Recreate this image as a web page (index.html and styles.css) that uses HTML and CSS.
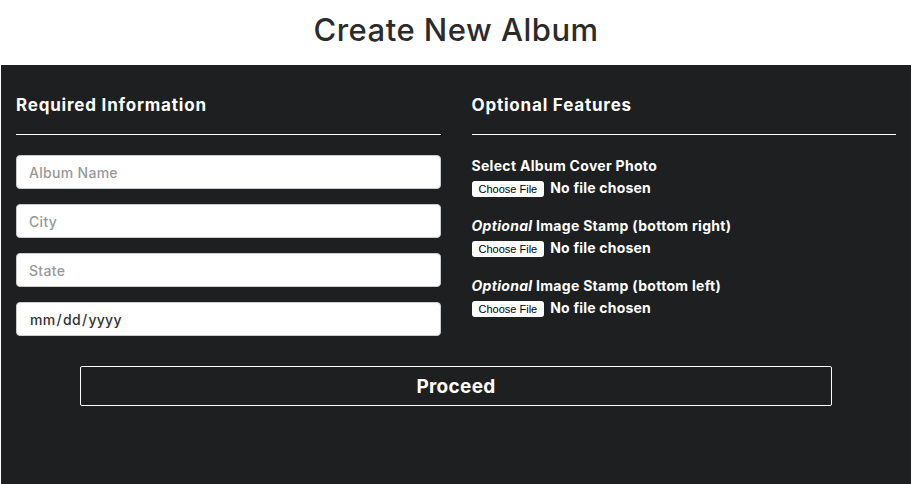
FILE: index.html
```html
<!DOCTYPE html>
<html lang="en">
<head>
  <meta charset="UTF-8">
  <title>Create New Album</title>
  <link rel="stylesheet" href="styles.css">
</head>
<body>
  <h1 class="page-title">Create New Album</h1>

  <div class="panel">
    <form class="album-form" onsubmit="return false">
      <div class="columns">
        <section class="col">
          <h2>Required Information</h2>
          <hr>
          <input type="text" class="field" placeholder="Album Name">
          <input type="text" class="field" placeholder="City">
          <input type="text" class="field" placeholder="State">
          <input type="date" class="field">
        </section>

        <section class="col">
          <h2>Optional Features</h2>
          <hr>
          <div class="file-group">
            <label>Select Album Cover Photo</label>
            <input type="file" class="file">
          </div>
          <div class="file-group">
            <label><em>Optional</em> Image Stamp (bottom right)</label>
            <input type="file" class="file">
          </div>
          <div class="file-group">
            <label><em>Optional</em> Image Stamp (bottom left)</label>
            <input type="file" class="file">
          </div>
        </section>
      </div>

      <button type="submit" class="proceed">Proceed</button>
    </form>
  </div>
</body>
</html>
```

FILE: styles.css
```css
body {
  margin: 0;
  padding: 0;
  font-family: Inter, 'Open Sans', sans-serif;
  background: #fff;
}

.page-title {
  box-sizing: border-box;
  height: 65px;
  margin: 0;
  padding-bottom: 6px;
  display: flex;
  align-items: center;
  justify-content: center;
  font-size: 31px;
  font-weight: 500;
  letter-spacing: 0.5px;
  color: #2b2b2b;
}

.panel {
  width: 880px;
  margin: 0 auto;
  padding: 28px 15px 80px;
  background: #1e1f21;
  color: #fff;
}

.columns {
  display: flex;
  gap: 31px;
}

.col {
  flex: 1;
}

.col h2 {
  margin: 0;
  font-size: 17px;
  line-height: 24px;
  font-weight: 700;
  letter-spacing: 0.8px;
}

.col hr {
  margin: 17px 0 20px;
  border: none;
  border-top: 1px solid #fff;
}

.field {
  display: block;
  box-sizing: border-box;
  width: 100%;
  height: 34px;
  margin: 0 0 15px;
  padding: 0 12px;
  font-family: inherit;
  font-size: 14px;
  font-weight: 500;
  letter-spacing: 0.3px;
  color: #333;
  background: #fff;
  border: 1px solid #ccc;
  border-radius: 4px;
}

.field::placeholder {
  color: #999;
}

.field::-webkit-calendar-picker-indicator {
  display: none;
}

.file-group {
  margin-bottom: 13px;
}

.file-group label {
  display: block;
  font-size: 14px;
  line-height: 16px;
  font-weight: 700;
  letter-spacing: 0.3px;
  padding-top: 3px;
  margin-top: 4px;
  margin-bottom: 5px;
}

.file-group em {
  font-style: italic;
}

.file {
  display: block;
  height: 23px;
  font-family: inherit;
  font-size: 14px;
  font-weight: 700;
  letter-spacing: 0.2px;
  color: #fff;
}

.file::file-selector-button {
  height: 16px;
  font-family: 'Liberation Sans', Arial, sans-serif;
  font-size: 11px;
  font-weight: 400;
  letter-spacing: 0;
  color: #000;
  background: #fff;
  border: none;
  border-radius: 3px;
  padding: 0 7px;
  margin-right: 6px;
}

.proceed {
  display: block;
  width: 752px;
  height: 40px;
  margin: 15px auto 0;
  font-family: inherit;
  font-size: 19px;
  font-weight: 700;
  letter-spacing: 0.3px;
  color: #fff;
  background: transparent;
  border: 1px solid #fff;
  border-radius: 2px;
  cursor: pointer;
}
```
